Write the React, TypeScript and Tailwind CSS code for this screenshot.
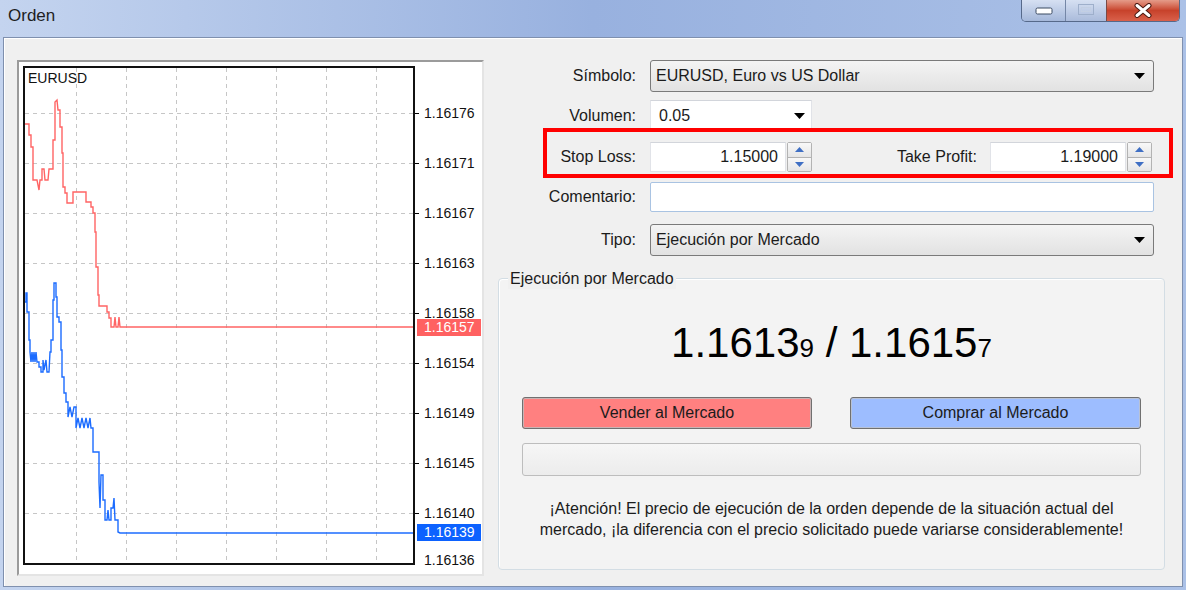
import React from "react";

// precio de cierre, trazado en escalones (coordenadas de la ventana)
const RED_PTS =
  "25,124 29,124 29,135 31,135 31,147 33,147 33,163 33,180 37,180 39,190 40,180 42,180 42,169 44,169 45,180 48,180 49,169 53,169 53,140 55,140 55,102 57,100 58,110 60,110 60,127 62,127 62,153 63,153 63,187 65,187 65,193 67,193 67,203 73,203 73,192 86,192 86,202 91,202 91,207 93,207 93,213 95,213 95,232 96,232 96,267 98,267 98,295 99,295 99,306 107,306 107,312 109,312 109,318 111,318 111,327 114,327 115,317 116,327 118,327 119,317 120,327 415,327";

const BLUE_PTS =
  "25,302 26,302 26,293 27,293 27,312 29,312 29,340 30,340 30,352 31,362 32,352 33,362 34,352 35,362 36,352 37,362 39,362 39,367 41,367 41,372 43,372 43,360 44,370 46,360 47,372 49,372 50,352 51,352 51,340 53,340 53,300 54,300 54,283 56,283 56,297 57,297 57,317 59,317 59,322 61,322 61,350 62,350 62,377 64,377 64,393 66,393 66,402 68,402 68,417 70,407 72,417 74,407 76,407 76,428 78,418 80,428 82,418 84,428 86,418 88,428 90,418 91,428 93,428 93,452 99,452 99,482 100,508 101,475 103,475 103,500 105,500 105,520 107,520 108,510 109,520 111,520 111,508 113,508 114,498 115,520 118,520 118,532 120,533 415,533";

const GRID_X = [76, 126, 176, 226, 276, 326, 376];
const GRID_Y = [113, 163, 213, 263, 313, 363, 413, 463, 513];
const AXIS: [string, number][] = [
  ["1.16176", 113],
  ["1.16171", 163],
  ["1.16167", 213],
  ["1.16163", 263],
  ["1.16158", 313],
  ["1.16154", 363],
  ["1.16149", 413],
  ["1.16145", 463],
  ["1.16140", 513],
  ["1.16136", 560],
];

function Chart() {
  return (
    <div className="h-[516px] w-[467px] border-2 border-[#9b9b9b] border-r-[#e4e4e4] border-b-[#e4e4e4] bg-white">
      <svg width="463" height="512" className="block">
        <g transform="translate(-19 -62)" fontFamily="Liberation Sans, Arial, sans-serif" fontSize="14">
          {GRID_X.map((x) => (
            <line key={x} x1={x + 0.5} y1={68} x2={x + 0.5} y2={563} stroke="#c6c6c6" strokeDasharray="4 4" shapeRendering="crispEdges" />
          ))}
          {GRID_Y.map((y) => (
            <g key={y}>
              <line x1={25} y1={y + 0.5} x2={413} y2={y + 0.5} stroke="#c6c6c6" strokeDasharray="4 4" shapeRendering="crispEdges" />
              <line x1={415} y1={y + 0.5} x2={419} y2={y + 0.5} stroke="#000" shapeRendering="crispEdges" />
            </g>
          ))}
          <polyline points={RED_PTS} fill="none" stroke="#ff6464" strokeWidth="1.4" strokeLinejoin="miter" />
          <polyline points={BLUE_PTS} fill="none" stroke="#1c6cff" strokeWidth="1.4" strokeLinejoin="miter" />
          <rect x={24} y={67} width={390} height={497} fill="none" stroke="#111" strokeWidth="2" />
          <text x={28} y={83} fill="#111">EURUSD</text>
          {AXIS.map(([t, y]) => (
            <text key={t} x={424} y={y + 5} fill="#111">
              {t}
            </text>
          ))}
          <rect x={417} y={319} width={64} height={17} fill="#ff6161" />
          <text x={424} y={332} fill="#fff">1.16157</text>
          <rect x={417} y={524} width={64} height={17} fill="#0c62ff" />
          <text x={424} y={537} fill="#fff">1.16139</text>
        </g>
      </svg>
    </div>
  );
}

function Arrow() {
  return (
    <svg width="11" height="6" className="shrink-0">
      <polygon points="0,0 11,0 5.5,6" fill="#000" />
    </svg>
  );
}

function Combo({ value, w }: { value: string; w: string }) {
  return (
    <div className={`ml-[14px] flex h-[32px] ${w} items-center justify-between rounded-[3px] border border-[#7a7a7a] bg-linear-to-b from-[#f4f4f4] to-[#e2e2e2] pl-[5px] pr-[8px]`}>
      <span>{value}</span>
      <Arrow />
    </div>
  );
}

function Spinner() {
  return (
    <div className="ml-px flex h-[30px] w-[25px] flex-col rounded-[2px] border border-[#b3b3b3] bg-[#ececec]">
      <div className="flex flex-1 items-center justify-center border-b border-[#b3b3b3] bg-linear-to-b from-[#f8f8f8] to-[#e6e6e6]">
        <svg width="9" height="5">
          <polygon points="0,5 9,5 4.5,0" fill="#3f6fc4" />
        </svg>
      </div>
      <div className="flex flex-1 items-center justify-center bg-linear-to-b from-[#f8f8f8] to-[#e6e6e6]">
        <svg width="9" height="5">
          <polygon points="0,0 9,0 4.5,5" fill="#3f6fc4" />
        </svg>
      </div>
    </div>
  );
}

function Label({ text, w = "w-[138px]" }: { text: string; w?: string }) {
  return <div className={`${w} shrink-0 text-right`}>{text}</div>;
}

function WindowButtons() {
  return (
    <div className="mr-[6px] flex h-[22px] overflow-hidden rounded-b-[5px] border border-t-0 border-[#56698a]">
      <div className="flex w-[44px] items-end justify-center border-r border-[#7486a6] bg-linear-to-b from-[#d6e0f2] to-[#a5b8da] pb-[6px]">
        <svg width="18" height="8">
          <rect x="1" y="1" width="16" height="6" rx="1.5" fill="#fff" stroke="#3b4a60" />
        </svg>
      </div>
      <div className="flex w-[41px] items-start justify-center border-r border-[#7a4a45] bg-linear-to-b from-[#d6e0f2] to-[#aabbdb] pt-[4px]">
        <svg width="16" height="11">
          <rect x="0.5" y="0.5" width="15" height="10" fill="none" stroke="#9eafcb" />
          <rect x="3.5" y="3.5" width="9" height="4" fill="none" stroke="#c3cfe3" />
        </svg>
      </div>
      <div className="flex w-[72px] items-start justify-center bg-linear-to-b from-[#e49b89] via-[#c7422b] to-[#d9604a] pt-[3px]">
        <svg width="20" height="15">
          <path d="M4 2.5 L16 12.5 M16 2.5 L4 12.5" stroke="#4b1a12" strokeWidth="5" strokeLinecap="round" />
          <path d="M4 2.5 L16 12.5 M16 2.5 L4 12.5" stroke="#fff" strokeWidth="3" strokeLinecap="round" />
        </svg>
      </div>
    </div>
  );
}

export default function App() {
  return (
    <div className="flex h-[590px] w-[1186px] flex-col overflow-hidden bg-linear-to-r from-[#c4d4ef] via-[#98b1df] to-[#abc1e7] font-['Liberation_Sans',Arial,sans-serif] text-[16px] text-[#1b1b1b]">
      {/* barra de título */}
      <div className="flex h-[37px] shrink-0 items-start justify-between">
        <div className="pl-[8px] pt-[6px] text-[17px] leading-[20px] text-[#1e1e1e]">Orden</div>
        <WindowButtons />
      </div>

      <div className="mx-[3px] mb-[3px] flex-1 border border-[#7f90ae] bg-[#f0f0f0] shadow-[inset_1px_1px_0_#ffffff]">
        <div className="flex pl-[13px] pt-[22px]">
          <Chart />

          <div className="relative ml-[14px] flex w-[667px] flex-col">
            <div className="flex h-[32px] items-center">
              <Label text="Símbolo:" />
              <Combo value="EURUSD, Euro vs US Dollar" w="w-[504px]" />
            </div>

            <div className="mt-[8px] flex h-[32px] items-center">
              <Label text="Volumen:" />
              <div className="ml-[14px] flex h-[32px] w-[162px] items-center justify-between border border-[#e1e3e8] border-t-[#d2d5db] bg-white pl-[8px] pr-[6px]">
                <span>0.05</span>
                <Arrow />
              </div>
            </div>

            <div className="mt-[10px] flex h-[30px] items-center">
              <Label text="Stop Loss:" />
              <div className="ml-[14px] flex h-[30px] w-[136px] items-center justify-end border border-[#e1e3e8] border-t-[#d2d5db] bg-white pr-[7px]">
                1.15000
              </div>
              <Spinner />
              <Label text="Take Profit:" w="w-[165px]" />
              <div className="ml-[13px] flex h-[30px] w-[136px] items-center justify-end border border-[#e1e3e8] border-t-[#d2d5db] bg-white pr-[7px]">
                1.19000
              </div>
              <Spinner />
            </div>

            <div className="mt-[10px] flex h-[30px] items-center">
              <Label text="Comentario:" />
              <div className="ml-[14px] h-[30px] w-[504px] rounded-[2px] border border-[#a9c3e2] bg-white" />
            </div>

            <div className="mt-[12px] flex h-[32px] items-center">
              <Label text="Tipo:" />
              <Combo value="Ejecución por Mercado" w="w-[504px]" />
            </div>

            {/* marca roja sobre los niveles */}
            <div className="absolute left-[45px] top-[68px] h-[50px] w-[630px] border-4 border-[#ff0000]" />

            <div className="relative mt-[22px] h-[292px] rounded-[4px] border border-[#d3dde4] bg-[#f3f3f3] px-[23px] shadow-[inset_1px_1px_0_#ffffff]">
              <span className="absolute -top-[10px] left-[9px] bg-[#f0f0f0] px-[2px] leading-[20px]">
                Ejecución por Mercado
              </span>

              <div className="mt-[43px] h-[42px] text-center text-[42px] leading-[42px] text-black">
                1.1613<span className="text-[26px] leading-none">9</span> / 1.1615
                <span className="text-[26px] leading-none">7</span>
              </div>

              <div className="mt-[33px] flex h-[32px] justify-between">
                <div className="flex w-[290px] items-center justify-center rounded-[3px] border border-[#707070] bg-[#ff8080] shadow-[inset_0_0_0_1px_#c9b3b3]">
                  Vender al Mercado
                </div>
                <div className="flex w-[291px] items-center justify-center rounded-[3px] border border-[#707070] bg-[#9dbdff] shadow-[inset_0_0_0_1px_#b8c2d6]">
                  Comprar al Mercado
                </div>
              </div>

              <div className="mt-[14px] h-[33px] rounded-[3px] border border-[#bdbdbd] bg-linear-to-b from-[#f6f6f6] to-[#ececec]" />

              <div className="mt-[22px] text-center leading-[21px]">
                ¡Atención! El precio de ejecución de la orden depende de la situación actual del
                <br />
                mercado, ¡la diferencia con el precio solicitado puede variarse considerablemente!
              </div>
            </div>
          </div>
        </div>
      </div>
    </div>
  );
}
